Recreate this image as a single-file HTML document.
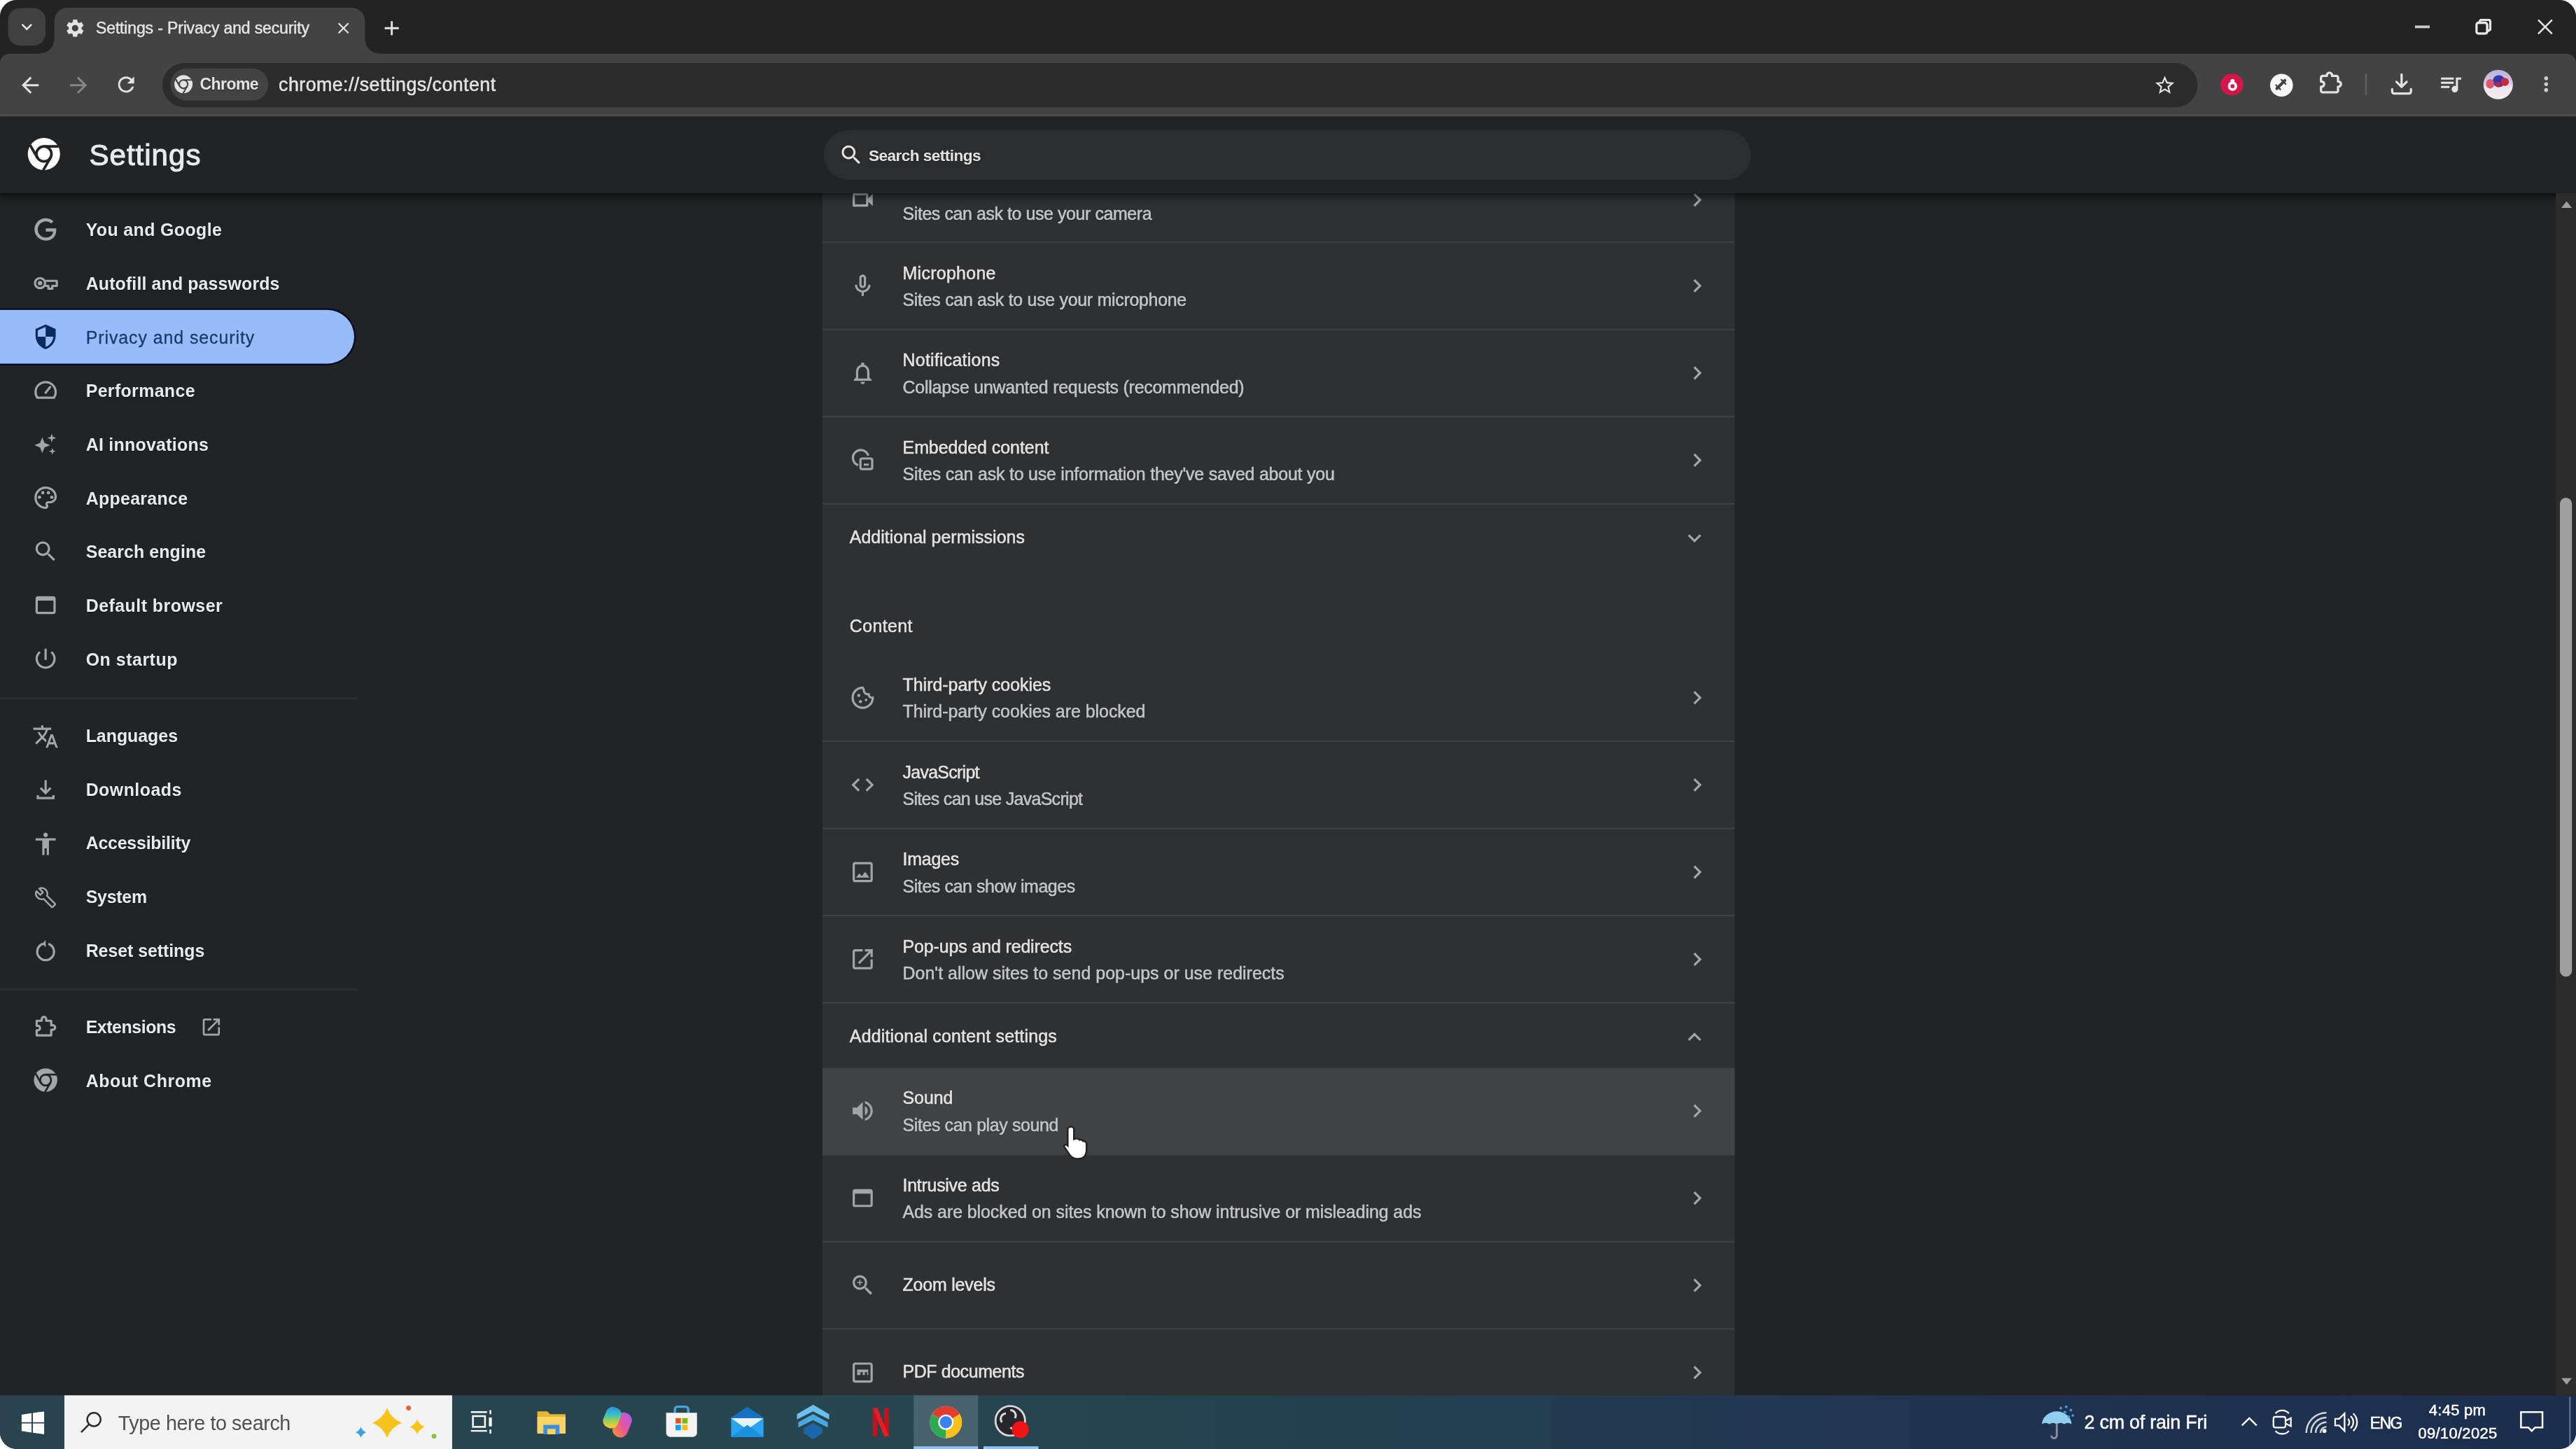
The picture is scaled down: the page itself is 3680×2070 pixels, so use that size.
<!DOCTYPE html><html><head><meta charset="utf-8"><title>Settings</title><style>html,body{margin:0;padding:0;background:#fff;width:3680px;height:2070px;overflow:hidden}#frame{position:absolute;left:0;top:0;width:3680px;height:2070px;border-radius:24px;overflow:hidden;background:#212324}#s{position:absolute;left:0;top:0;width:1920px;height:1080px;transform:scale(1.916667);transform-origin:0 0;filter:blur(0.400px);font-family:"Liberation Sans",sans-serif;}.t{display:block;-webkit-text-stroke:0.280px currentColor;text-shadow:0 0.500px 0.700px rgba(0,0,0,.45)}</style></head><body><div id="frame"><div id="s">
<div style="position:absolute;left:0px;top:0px;width:1920px;height:40px;background:#232323;"></div>
<div style="position:absolute;left:6px;top:6px;width:28px;height:28px;background:#404040;border-radius:9px;"></div>
<svg style="position:absolute;left:12.0px;top:12.0px;" width="16" height="16" viewBox="0 0 24 24"><path fill="#e3e3e3" d="M16.59 8.59L12 13.17 7.41 8.59 6 10l6 6 6-6z"/></svg>
<svg style="position:absolute;left:28px;top:5px" width="258" height="36" viewBox="28 5 258 36"><path d="M29.500 40.500 H282.500 V39.700 A10.500 10.500 0 0 1 272 29.200 V15.700 A10 10 0 0 0 262 5.700 H50.500 A10 10 0 0 0 40.500 15.700 V29.200 A10.500 10.500 0 0 1 30 39.700 H29.500 Z" fill="#434343"/></svg>
<svg style="position:absolute;left:48.0px;top:12.5px;" width="16" height="16" viewBox="0 0 24 24"><path fill="#e3e3e3" d="M19.14 12.94c.04-.3.06-.61.06-.94 0-.32-.02-.64-.07-.94l2.03-1.58c.18-.14.23-.41.12-.61l-1.92-3.32c-.12-.22-.37-.29-.59-.22l-2.39.96c-.5-.38-1.03-.7-1.62-.94l-.36-2.54c-.04-.24-.24-.41-.48-.41h-3.84c-.24 0-.43.17-.47.41l-.36 2.54c-.59.24-1.13.57-1.62.94l-2.39-.96c-.22-.08-.47 0-.59.22L2.74 8.87c-.12.21-.08.47.12.61l2.03 1.58c-.05.3-.09.63-.09.94s.02.64.07.94l-2.03 1.58c-.18.14-.23.41-.12.61l1.92 3.32c.12.22.37.29.59.22l2.39-.96c.5.38 1.03.7 1.62.94l.36 2.54c.05.24.24.41.48.41h3.84c.24 0 .44-.17.47-.41l.36-2.54c.59-.24 1.13-.56 1.62-.94l2.39.96c.22.08.47 0 .59-.22l1.92-3.32c.12-.22.07-.47-.12-.61l-2.01-1.58zM12 15.6c-1.98 0-3.6-1.62-3.6-3.6s1.62-3.6 3.6-3.6 3.6 1.62 3.6 3.6-1.62 3.6-3.6 3.6z"/></svg>
<span class="t" style="position:absolute;left:71.5px;top:10.5px;height:20px;line-height:20px;font-size:12px;color:#e3e3e3;font-weight:400;white-space:nowrap;letter-spacing:-0.078px;">Settings - Privacy and security</span>
<svg style="position:absolute;left:249.0px;top:13.5px;" width="14" height="14" viewBox="0 0 24 24"><path fill="#e3e3e3" d="M19 6.41L17.59 5 12 10.59 6.41 5 5 6.41 10.59 12 5 17.59 6.41 19 12 13.41 17.59 19 19 17.59 13.41 12z"/></svg>
<svg style="position:absolute;left:283.0px;top:11.5px;" width="18" height="18" viewBox="0 0 24 24"><path fill="#e3e3e3" d="M19 13h-6v6h-2v-6H5v-2h6V5h2v6h6v2z"/></svg>
<div style="position:absolute;left:1800px;top:18.7px;width:10.5px;height:1.9px;background:#c9c9c9;"></div>
<svg style="position:absolute;left:1845px;top:14px" width="12" height="12" viewBox="0 0 12 12" fill="none" stroke="#e8e8e8" stroke-width="1.800"><rect x="0.8" y="3" width="8" height="8" rx="1.5"/><path d="M3.2 2.8 V2.3 a1.5 1.5 0 0 1 1.5 -1.5 H9.7 a1.5 1.5 0 0 1 1.5 1.5 V7.3 a1.5 1.5 0 0 1 -1.5 1.5 H9.2"/></svg>
<svg style="position:absolute;left:1891px;top:14px" width="12" height="12" viewBox="0 0 12 12" stroke="#e3e3e3" stroke-width="1.3"><path d="M0.8 0.8 L11.2 11.2 M11.2 0.8 L0.8 11.2"/></svg>
<div style="position:absolute;left:0px;top:39.7px;width:1920px;height:47.3px;background:#434343;border-radius:7px 7px 0 0;"></div>
<div style="position:absolute;left:0px;top:85.3px;width:1920px;height:1.3px;background:#535455;"></div>
<svg style="position:absolute;left:13.0px;top:53.5px;" width="19" height="19" viewBox="0 0 24 24"><path fill="#e3e3e3" d="M20 11H7.83l5.59-5.59L12 4l-8 8 8 8 1.41-1.41L7.83 13H20v-2z"/></svg>
<svg style="position:absolute;left:48.5px;top:53.5px;" width="19" height="19" viewBox="0 0 24 24"><path fill="#858585" d="M12 4l-1.41 1.41L16.17 11H4v2h12.17l-5.58 5.59L12 20l8-8z"/></svg>
<svg style="position:absolute;left:85.0px;top:54.0px;" width="18" height="18" viewBox="0 0 24 24"><path fill="#e3e3e3" d="M17.65 6.35C16.2 4.9 14.21 4 12 4c-4.42 0-7.99 3.58-7.99 8s3.57 8 7.99 8c3.73 0 6.84-2.55 7.73-6h-2.08c-.82 2.33-3.04 4-5.65 4-3.31 0-6-2.69-6-6s2.69-6 6-6c1.66 0 3.14.69 4.22 1.78L13 11h7V4l-2.35 2.35z"/></svg>
<div style="position:absolute;left:121px;top:47px;width:1516.5px;height:32.7px;background:#2c2c2c;border-radius:16.500px;"></div>
<div style="position:absolute;left:126.5px;top:51px;width:73.5px;height:24px;background:#434343;border-radius:12px;"></div>
<svg style="position:absolute;left:129.25px;top:55.25px" width="15.5" height="15.5" viewBox="0 0 24 24"><circle cx="12" cy="12" r="10.5" fill="#e3e3e3"/><circle cx="12" cy="12" r="4.9" fill="none" stroke="#434343" stroke-width="1.7"/><g stroke="#434343" stroke-width="1.7"><line x1="12" y1="7.1" x2="21.5" y2="7.1"/><line x1="12" y1="7.1" x2="21.5" y2="7.1" transform="rotate(120 12 12)"/><line x1="12" y1="7.1" x2="21.5" y2="7.1" transform="rotate(240 12 12)"/></g></svg>
<span class="t" style="position:absolute;left:149px;top:53.0px;height:20px;line-height:20px;font-size:12px;color:#e3e3e3;font-weight:700;white-space:nowrap;letter-spacing:-0.307px;-webkit-text-stroke:0;">Chrome</span>
<span class="t" style="position:absolute;left:207.7px;top:53.3px;height:20px;line-height:20px;font-size:14px;color:#e3e3e3;font-weight:400;white-space:nowrap;letter-spacing:0.223px;">chrome://settings/content</span>
<svg style="position:absolute;left:1605.0px;top:54.5px;" width="17" height="17" viewBox="0 0 24 24"><path fill="#e3e3e3" d="M22 9.24l-7.19-.62L12 2 9.19 8.63 2 9.24l5.46 4.73L5.82 21 12 17.27 18.18 21l-1.63-7.03L22 9.24zM12 15.4l-3.76 2.27 1-4.28-3.32-2.88 4.38-.38L12 6.1l1.71 4.04 4.38.38-3.32 2.88 1 4.28L12 15.4z"/></svg>
<div style="position:absolute;left:1655.25px;top:54.75px;width:16.500px;height:16.500px;border-radius:50%;background:#d4164a"></div>
<svg style="position:absolute;left:1658.5px;top:57.5px" width="10" height="11" viewBox="0 0 10 11"><circle cx="5" cy="6.200" r="3.500" fill="#fff"/><circle cx="5" cy="2.300" r="1.500" fill="#fff"/><circle cx="5" cy="6.300" r="1.500" fill="#d81b4a"/></svg>
<div style="position:absolute;left:1691.5px;top:54.5px;width:17px;height:17px;border-radius:50%;background:#f7f7f7"></div>
<svg style="position:absolute;left:1694px;top:57px" width="12" height="12" viewBox="0 0 12 12" stroke="#434343" stroke-width="2.2" stroke-linecap="round"><path d="M3 9 L9 3"/><path d="M2.4 6.4 L5.6 9.6 M6.4 2.4 L9.6 5.6" stroke-width="1.2"/></svg>
<svg style="position:absolute;left:1725.5px;top:50.4px" width="21" height="21" viewBox="0 0 24 24" fill="none" stroke="#e3e3e3" stroke-width="2" stroke-linejoin="round"><path d="M4.500 9 a1.500 1.500 0 0 1 1.500 -1.500 H9.500 V7 a2.200 2.200 0 0 1 4.400 0 V7.500 H17.500 a1.500 1.500 0 0 1 1.500 1.500 V12.300 H19.300 a2.200 2.200 0 0 1 0 4.400 H19 V20 a1.500 1.500 0 0 1 -1.500 1.500 H6 a1.500 1.500 0 0 1 -1.500 -1.500 V16.700 H5 a2.200 2.200 0 0 0 0 -4.400 H4.500 Z"/></svg>
<div style="position:absolute;left:1763px;top:55px;width:1px;height:16px;background:#666666;"></div>
<svg style="position:absolute;left:1780px;top:53px" width="20" height="20" viewBox="0 0 20 20" fill="none" stroke="#e3e3e3" stroke-width="1.7" stroke-linecap="round" stroke-linejoin="round"><path d="M10 2.5 V11.5 M6.2 8 L10 11.8 L13.8 8"/><path d="M3 13.5 V15.2 a1.5 1.5 0 0 0 1.5 1.5 H15.5 a1.5 1.5 0 0 0 1.5 -1.5 V13.5"/></svg>
<svg style="position:absolute;left:1817.0px;top:53.0px;" width="19" height="19" viewBox="0 0 24 24"><path fill="#e3e3e3" d="M15 6H3v2h12V6zm0 4H3v2h12v-2zM3 16h8v-2H3v2zM17 6v8.18c-.31-.11-.65-.18-1-.18-1.66 0-3 1.34-3 3s1.34 3 3 3 3-1.34 3-3V8h3V6h-5z"/></svg>
<div style="position:absolute;left:1851px;top:52px;width:22px;height:22px;border-radius:50%;overflow:hidden;background:linear-gradient(180deg,#b7b3dc 0%,#cfc6e2 40%,#f0e6ee 62%,#f4ecf0 100%);"><div style="position:absolute;left:7px;top:4px;width:9px;height:9px;border-radius:50%;background:#3236b4"></div><div style="position:absolute;left:12.500px;top:5.500px;width:6px;height:6px;border-radius:50%;background:#c62a3c"></div><div style="position:absolute;left:1.500px;top:7px;width:6.500px;height:7px;border-radius:50%;background:#e0566a"></div><div style="position:absolute;left:9px;top:9px;width:4px;height:4px;border-radius:50%;background:#b82846"></div></div>
<svg style="position:absolute;left:1889.25px;top:54.25px;" width="17.5" height="17.5" viewBox="0 0 24 24"><path fill="#cfcfcf" d="M12 8c1.1 0 2-.9 2-2s-.9-2-2-2-2 .9-2 2 .9 2 2 2zm0 2c-1.1 0-2 .9-2 2s.9 2 2 2 2-.9 2-2-.9-2-2-2zm0 6c-1.1 0-2 .9-2 2s.9 2 2 2 2-.9 2-2-.9-2-2-2z"/></svg>
<div style="position:absolute;left:0px;top:87px;width:1920px;height:953px;background:#212324;"></div>
<div style="position:absolute;left:613.3px;top:100px;width:679.7px;height:960px;background:#2f3032;"></div>
<svg style="position:absolute;left:632.8px;top:139.0px;" width="20" height="20" viewBox="0 0 24 24"><path fill="#a2a5a9" d="M15 8v8H5V8h10m1-2H4c-.55 0-1 .45-1 1v10c0 .55.45 1 1 1h12c.55 0 1-.45 1-1v-3.5l4 4v-11l-4 4V7c0-.55-.45-1-1-1z"/></svg><span class="t" style="position:absolute;left:672.8px;top:129.7px;height:20px;line-height:20px;font-size:13px;color:#e3e3e3;font-weight:400;white-space:nowrap;letter-spacing:0px;"></span><span class="t" style="position:absolute;left:672.8px;top:149.8px;height:20px;line-height:20px;font-size:13px;color:#c4c5c7;font-weight:400;white-space:nowrap;letter-spacing:-0.209px;">Sites can ask to use your camera</span><svg style="position:absolute;left:1255.0px;top:139.0px;" width="20" height="20" viewBox="0 0 24 24"><path fill="#a2a5a9" d="M10 6L8.59 7.41 13.17 12l-4.58 4.59L10 18l6-6z"/></svg>
<div style="position:absolute;left:613.3px;top:180px;width:679.7px;height:1px;background:#424346;"></div><svg style="position:absolute;left:632.8px;top:203.0px;" width="20" height="20" viewBox="0 0 24 24"><path fill="#a2a5a9" d="M12 14c1.66 0 3-1.34 3-3V5c0-1.66-1.34-3-3-3S9 3.34 9 5v6c0 1.66 1.34 3 3 3zm-1-9c0-.55.45-1 1-1s1 .45 1 1v6c0 .55-.45 1-1 1s-1-.45-1-1V5zm6 6c0 2.76-2.24 5-5 5s-5-2.24-5-5H5c0 3.53 2.61 6.43 6 6.92V21h2v-3.08c3.39-.49 6-3.39 6-6.92h-2z"/></svg><span class="t" style="position:absolute;left:672.8px;top:193.7px;height:20px;line-height:20px;font-size:13px;color:#e3e3e3;font-weight:400;white-space:nowrap;letter-spacing:0.156px;">Microphone</span><span class="t" style="position:absolute;left:672.8px;top:213.8px;height:20px;line-height:20px;font-size:13px;color:#c4c5c7;font-weight:400;white-space:nowrap;letter-spacing:-0.147px;">Sites can ask to use your microphone</span><svg style="position:absolute;left:1255.0px;top:203.0px;" width="20" height="20" viewBox="0 0 24 24"><path fill="#a2a5a9" d="M10 6L8.59 7.41 13.17 12l-4.58 4.59L10 18l6-6z"/></svg>
<div style="position:absolute;left:613.3px;top:245px;width:679.7px;height:1px;background:#424346;"></div><svg style="position:absolute;left:632.8px;top:268.0px;" width="20" height="20" viewBox="0 0 24 24"><path fill="#a2a5a9" d="M12 22c1.1 0 2-.9 2-2h-4c0 1.1.9 2 2 2zm6-6v-5c0-3.07-1.63-5.64-4.5-6.32V4c0-.83-.67-1.5-1.5-1.5s-1.5.67-1.5 1.5v.68C7.64 5.36 6 7.92 6 11v5l-2 2v1h16v-1l-2-2zm-2 1H8v-6c0-2.48 1.51-4.5 4-4.5s4 2.02 4 4.5v6z"/></svg><span class="t" style="position:absolute;left:672.8px;top:258.7px;height:20px;line-height:20px;font-size:13px;color:#e3e3e3;font-weight:400;white-space:nowrap;letter-spacing:0.130px;">Notifications</span><span class="t" style="position:absolute;left:672.8px;top:278.8px;height:20px;line-height:20px;font-size:13px;color:#c4c5c7;font-weight:400;white-space:nowrap;letter-spacing:-0.123px;">Collapse unwanted requests (recommended)</span><svg style="position:absolute;left:1255.0px;top:268.0px;" width="20" height="20" viewBox="0 0 24 24"><path fill="#a2a5a9" d="M10 6L8.59 7.41 13.17 12l-4.58 4.59L10 18l6-6z"/></svg>
<div style="position:absolute;left:613.3px;top:310px;width:679.7px;height:1px;background:#424346;"></div><svg style="position:absolute;left:632.8px;top:333.0px" width="20" height="20" viewBox="0 0 24 24" fill="none" stroke="#a2a5a9" stroke-width="2"><path d="M8 16.500 A7 7 0 1 1 17 8"/><rect x="10" y="10.500" width="10.500" height="9.500" rx="1.500"/><path d="M13 16 h4.500" stroke-width="1.800"/></svg><span class="t" style="position:absolute;left:672.8px;top:323.7px;height:20px;line-height:20px;font-size:13px;color:#e3e3e3;font-weight:400;white-space:nowrap;letter-spacing:-0.009px;">Embedded content</span><span class="t" style="position:absolute;left:672.8px;top:343.8px;height:20px;line-height:20px;font-size:13px;color:#c4c5c7;font-weight:400;white-space:nowrap;letter-spacing:-0.102px;">Sites can ask to use information they've saved about you</span><svg style="position:absolute;left:1255.0px;top:333.0px;" width="20" height="20" viewBox="0 0 24 24"><path fill="#a2a5a9" d="M10 6L8.59 7.41 13.17 12l-4.58 4.59L10 18l6-6z"/></svg>
<div style="position:absolute;left:613.3px;top:375px;width:679.7px;height:1px;background:#424346;"></div>
<span class="t" style="position:absolute;left:633.3px;top:390.5px;height:20px;line-height:20px;font-size:13px;color:#e3e3e3;font-weight:400;white-space:nowrap;letter-spacing:0.019px;">Additional permissions</span>
<svg style="position:absolute;left:1253.0px;top:390.5px;" width="20" height="20" viewBox="0 0 24 24"><path fill="#a2a5a9" d="M16.59 8.59L12 13.17 7.41 8.59 6 10l6 6 6-6z"/></svg>
<span class="t" style="position:absolute;left:633.3px;top:457.0px;height:20px;line-height:20px;font-size:13px;color:#e3e3e3;font-weight:400;white-space:nowrap;letter-spacing:0.208px;">Content</span>
<svg style="position:absolute;left:632.8px;top:510.0px" width="20" height="20" viewBox="0 0 24 24"><path fill="none" stroke="#a2a5a9" stroke-width="2" d="M12 3 a9 9 0 1 0 9 9 c-2 .3 -3.600 -1 -3.600 -3 c-2.400 .4 -4.400 -1.400 -4.400 -3.500 c0 -.9 -.4 -1.800 -1 -2.500z"/><circle cx="8.5" cy="10" r="1.4" fill="#a2a5a9"/><circle cx="10" cy="15.500" r="1.4" fill="#a2a5a9"/><circle cx="15" cy="14" r="1.2" fill="#a2a5a9"/></svg><span class="t" style="position:absolute;left:672.8px;top:500.7px;height:20px;line-height:20px;font-size:13px;color:#e3e3e3;font-weight:400;white-space:nowrap;letter-spacing:-0.002px;">Third-party cookies</span><span class="t" style="position:absolute;left:672.8px;top:520.8px;height:20px;line-height:20px;font-size:13px;color:#c4c5c7;font-weight:400;white-space:nowrap;letter-spacing:-0.012px;">Third-party cookies are blocked</span><svg style="position:absolute;left:1255.0px;top:510.0px;" width="20" height="20" viewBox="0 0 24 24"><path fill="#a2a5a9" d="M10 6L8.59 7.41 13.17 12l-4.58 4.59L10 18l6-6z"/></svg>
<div style="position:absolute;left:613.3px;top:552px;width:679.7px;height:1px;background:#424346;"></div><svg style="position:absolute;left:632.8px;top:575.0px;" width="20" height="20" viewBox="0 0 24 24"><path fill="#a2a5a9" d="M9.4 16.6L4.8 12l4.6-4.6L8 6l-6 6 6 6 1.4-1.4zm5.2 0l4.6-4.6-4.6-4.6L16 6l6 6-6 6-1.4-1.4z"/></svg><span class="t" style="position:absolute;left:672.8px;top:565.7px;height:20px;line-height:20px;font-size:13px;color:#e3e3e3;font-weight:400;white-space:nowrap;letter-spacing:-0.370px;">JavaScript</span><span class="t" style="position:absolute;left:672.8px;top:585.8px;height:20px;line-height:20px;font-size:13px;color:#c4c5c7;font-weight:400;white-space:nowrap;letter-spacing:-0.348px;">Sites can use JavaScript</span><svg style="position:absolute;left:1255.0px;top:575.0px;" width="20" height="20" viewBox="0 0 24 24"><path fill="#a2a5a9" d="M10 6L8.59 7.41 13.17 12l-4.58 4.59L10 18l6-6z"/></svg>
<div style="position:absolute;left:613.3px;top:617px;width:679.7px;height:1px;background:#424346;"></div><svg style="position:absolute;left:632.8px;top:640.0px;" width="20" height="20" viewBox="0 0 24 24"><path fill="#a2a5a9" d="M19 5v14H5V5h14m0-2H5c-1.1 0-2 .9-2 2v14c0 1.1.9 2 2 2h14c1.1 0 2-.9 2-2V5c0-1.1-.9-2-2-2zm-4.86 8.86l-3 3.87L9 13.14 6 17h12l-3.86-5.14z"/></svg><span class="t" style="position:absolute;left:672.8px;top:630.7px;height:20px;line-height:20px;font-size:13px;color:#e3e3e3;font-weight:400;white-space:nowrap;letter-spacing:-0.107px;">Images</span><span class="t" style="position:absolute;left:672.8px;top:650.8px;height:20px;line-height:20px;font-size:13px;color:#c4c5c7;font-weight:400;white-space:nowrap;letter-spacing:-0.212px;">Sites can show images</span><svg style="position:absolute;left:1255.0px;top:640.0px;" width="20" height="20" viewBox="0 0 24 24"><path fill="#a2a5a9" d="M10 6L8.59 7.41 13.17 12l-4.58 4.59L10 18l6-6z"/></svg>
<div style="position:absolute;left:613.3px;top:682px;width:679.7px;height:1px;background:#424346;"></div><svg style="position:absolute;left:632.8px;top:705.0px;" width="20" height="20" viewBox="0 0 24 24"><path fill="#a2a5a9" d="M19 19H5V5h7V3H5c-1.11 0-2 .9-2 2v14c0 1.1.89 2 2 2h14c1.1 0 2-.9 2-2v-7h-2v7zM14 3v2h3.59l-9.83 9.83 1.41 1.41L19 6.41V10h2V3h-7z"/></svg><span class="t" style="position:absolute;left:672.8px;top:695.7px;height:20px;line-height:20px;font-size:13px;color:#e3e3e3;font-weight:400;white-space:nowrap;letter-spacing:-0.057px;">Pop-ups and redirects</span><span class="t" style="position:absolute;left:672.8px;top:715.8px;height:20px;line-height:20px;font-size:13px;color:#c4c5c7;font-weight:400;white-space:nowrap;letter-spacing:0.018px;">Don't allow sites to send pop-ups or use redirects</span><svg style="position:absolute;left:1255.0px;top:705.0px;" width="20" height="20" viewBox="0 0 24 24"><path fill="#a2a5a9" d="M10 6L8.59 7.41 13.17 12l-4.58 4.59L10 18l6-6z"/></svg>
<div style="position:absolute;left:613.3px;top:747px;width:679.7px;height:1px;background:#424346;"></div>
<span class="t" style="position:absolute;left:633.3px;top:762.7px;height:20px;line-height:20px;font-size:13px;color:#e3e3e3;font-weight:400;white-space:nowrap;letter-spacing:0.101px;">Additional content settings</span>
<svg style="position:absolute;left:1253.0px;top:762.5px;" width="20" height="20" viewBox="0 0 24 24"><path fill="#a2a5a9" d="M12 8l-6 6 1.41 1.41L12 10.83l4.59 4.58L18 14z"/></svg>
<div style="position:absolute;left:613.3px;top:796px;width:679.7px;height:64px;background:#414244;"></div><svg style="position:absolute;left:632.8px;top:818.0px;" width="20" height="20" viewBox="0 0 24 24"><path fill="#a2a5a9" d="M3 9v6h4l5 5V4L7 9H3zm13.5 3c0-1.77-1.02-3.29-2.5-4.03v8.05c1.48-.73 2.5-2.25 2.5-4.02zM14 3.23v2.06c2.89.86 5 3.54 5 6.71s-2.11 5.85-5 6.71v2.06c4.01-.91 7-4.49 7-8.77s-2.99-7.86-7-8.77z"/></svg><span class="t" style="position:absolute;left:672.8px;top:808.7px;height:20px;line-height:20px;font-size:13px;color:#e3e3e3;font-weight:400;white-space:nowrap;letter-spacing:-0.019px;">Sound</span><span class="t" style="position:absolute;left:672.8px;top:828.8px;height:20px;line-height:20px;font-size:13px;color:#c4c5c7;font-weight:400;white-space:nowrap;letter-spacing:-0.198px;">Sites can play sound</span><svg style="position:absolute;left:1255.0px;top:818.0px;" width="20" height="20" viewBox="0 0 24 24"><path fill="#a2a5a9" d="M10 6L8.59 7.41 13.17 12l-4.58 4.59L10 18l6-6z"/></svg>
<div style="position:absolute;left:613.3px;top:860px;width:679.7px;height:1px;background:#424346;"></div><svg style="position:absolute;left:632.8px;top:883.0px;" width="20" height="20" viewBox="0 0 24 24"><path fill="#a2a5a9" d="M19 4H5c-1.11 0-2 .9-2 2v12c0 1.1.89 2 2 2h14c1.1 0 2-.9 2-2V6c0-1.1-.89-2-2-2zm0 14H5V8h14v10z"/></svg><span class="t" style="position:absolute;left:672.8px;top:873.7px;height:20px;line-height:20px;font-size:13px;color:#e3e3e3;font-weight:400;white-space:nowrap;letter-spacing:-0.131px;">Intrusive ads</span><span class="t" style="position:absolute;left:672.8px;top:893.8px;height:20px;line-height:20px;font-size:13px;color:#c4c5c7;font-weight:400;white-space:nowrap;letter-spacing:-0.034px;">Ads are blocked on sites known to show intrusive or misleading ads</span><svg style="position:absolute;left:1255.0px;top:883.0px;" width="20" height="20" viewBox="0 0 24 24"><path fill="#a2a5a9" d="M10 6L8.59 7.41 13.17 12l-4.58 4.59L10 18l6-6z"/></svg>
<div style="position:absolute;left:613.3px;top:925px;width:679.7px;height:1px;background:#424346;"></div><svg style="position:absolute;left:632.8px;top:948.0px;" width="20" height="20" viewBox="0 0 24 24"><path fill="#a2a5a9" d="M15.5 14h-.79l-.28-.27C15.41 12.59 16 11.11 16 9.5 16 5.91 13.09 3 9.5 3S3 5.91 3 9.5 5.91 16 9.5 16c1.61 0 3.09-.59 4.23-1.57l.27.28v.79l5 4.99L20.49 19l-4.99-5zm-6 0C7.01 14 5 11.99 5 9.5S7.01 5 9.5 5 14 7.01 14 9.5 11.99 14 9.5 14zm2.5-4h-2v2H9v-2H7V9h2V7h1v2h2v1z"/></svg><span class="t" style="position:absolute;left:672.8px;top:948.3px;height:20px;line-height:20px;font-size:13px;color:#e3e3e3;font-weight:400;white-space:nowrap;letter-spacing:-0.098px;">Zoom levels</span><svg style="position:absolute;left:1255.0px;top:948.0px;" width="20" height="20" viewBox="0 0 24 24"><path fill="#a2a5a9" d="M10 6L8.59 7.41 13.17 12l-4.58 4.59L10 18l6-6z"/></svg>
<div style="position:absolute;left:613.3px;top:990px;width:679.7px;height:1px;background:#424346;"></div><svg style="position:absolute;left:632.8px;top:1013.0px" width="20" height="20" viewBox="0 0 24 24" fill="none" stroke="#a2a5a9" stroke-width="2"><rect x="4" y="4" width="16" height="16" rx="1.500"/><path d="M7 10.500 h10 M7 13 h3 M12 13 h2 M16 13 h1" stroke-width="2.400"/></svg><span class="t" style="position:absolute;left:672.8px;top:1013.3px;height:20px;line-height:20px;font-size:13px;color:#e3e3e3;font-weight:400;white-space:nowrap;letter-spacing:-0.208px;">PDF documents</span><svg style="position:absolute;left:1255.0px;top:1013.0px;" width="20" height="20" viewBox="0 0 24 24"><path fill="#a2a5a9" d="M10 6L8.59 7.41 13.17 12l-4.58 4.59L10 18l6-6z"/></svg>
<div style="position:absolute;left:0px;top:87px;width:1920px;height:56.5px;background:#212324;box-shadow:0 2px 5px 1px rgba(0,0,0,.55);"></div>
<svg style="position:absolute;left:19.049999999999997px;top:101.05px" width="27.5" height="27.5" viewBox="0 0 24 24"><circle cx="12" cy="12" r="10.5" fill="#ffffff"/><circle cx="12" cy="12" r="4.9" fill="none" stroke="#212324" stroke-width="1.7"/><g stroke="#212324" stroke-width="1.7"><line x1="12" y1="7.1" x2="21.5" y2="7.1"/><line x1="12" y1="7.1" x2="21.5" y2="7.1" transform="rotate(120 12 12)"/><line x1="12" y1="7.1" x2="21.5" y2="7.1" transform="rotate(240 12 12)"/></g></svg>
<span class="t" style="position:absolute;left:66.5px;top:106.0px;height:20px;line-height:20px;font-size:22px;color:#e8eaed;font-weight:400;white-space:nowrap;letter-spacing:0.500px;height:30px;line-height:30px;margin-top:-5px;-webkit-text-stroke:0.550px currentColor;">Settings</span>
<div style="position:absolute;left:614px;top:96.5px;width:691.3px;height:37.8px;background:#2c2d2e;border-radius:19px;"></div>
<svg style="position:absolute;left:624.5px;top:105.5px;" width="19" height="19" viewBox="0 0 24 24"><path fill="#e3e3e3" d="M15.5 14h-.79l-.28-.27C15.41 12.59 16 11.11 16 9.5 16 5.91 13.09 3 9.5 3S3 5.91 3 9.5 5.91 16 9.5 16c1.61 0 3.09-.59 4.23-1.57l.27.28v.79l5 4.99L20.49 19l-4.99-5zm-6 0C7.01 14 5 11.99 5 9.5S7.01 5 9.5 5 14 7.01 14 9.5 11.99 14 9.5 14z"/></svg>
<span class="t" style="position:absolute;left:647.5px;top:105.6px;height:20px;line-height:20px;font-size:11.8px;color:#e3e3e3;font-weight:700;white-space:nowrap;letter-spacing:-0.291px;-webkit-text-stroke:0;">Search settings</span>
<span class="t" style="position:absolute;left:64px;top:161.9px;height:20px;line-height:20px;font-size:13px;color:#e8eaed;font-weight:700;white-space:nowrap;letter-spacing:0.200px;-webkit-text-stroke:0;">You and Google</span><svg style="position:absolute;left:23.799999999999997px;top:161.0px;" width="20" height="20" viewBox="0 0 24 24"><path fill="#a2a5a9" d="M21.35 11.1h-9.17v2.73h6.51c-.33 3.81-3.5 5.44-6.5 5.44C8.36 19.27 5 16.25 5 12c0-4.1 3.2-7.27 7.2-7.27 3.09 0 4.9 1.97 4.9 1.97L19 4.72S16.56 2 12.1 2C6.42 2 2.03 6.8 2.03 12c0 5.05 4.13 10 10.22 10 5.35 0 9.25-3.67 9.25-9.09 0-1.15-.15-1.81-.15-1.81z"/></svg>
<span class="t" style="position:absolute;left:64px;top:201.9px;height:20px;line-height:20px;font-size:13px;color:#e8eaed;font-weight:700;white-space:nowrap;letter-spacing:0.067px;-webkit-text-stroke:0;">Autofill and passwords</span><svg style="position:absolute;left:23.799999999999997px;top:201px" width="20" height="20" viewBox="0 0 24 24" fill="none" stroke="#a2a5a9" stroke-width="2"><circle cx="7" cy="12" r="4.500"/><circle cx="7" cy="12" r="1" fill="#a2a5a9"/><path d="M11.500 10 H22 V14.500 H18 V17 H14.500 V14.500 H11.500" stroke-linejoin="round"/></svg>
<div style="position:absolute;left:-2px;top:230.7px;width:266.2px;height:40.6px;background:#98bcfa;border-radius:0 20.500px 20.500px 0;box-shadow:0 0 0 1.200px #030b22;"></div><span class="t" style="position:absolute;left:64px;top:241.9px;height:20px;line-height:20px;font-size:13px;color:#1b3a6b;font-weight:400;white-space:nowrap;letter-spacing:0.484px;-webkit-text-stroke:0.150px currentColor;text-shadow:none;">Privacy and security</span><svg style="position:absolute;left:23.799999999999997px;top:241.0px;" width="20" height="20" viewBox="0 0 24 24"><path fill="#0a2a5e" d="M12 1L3 5v6c0 5.55 3.84 10.74 9 12 5.16-1.26 9-6.45 9-12V5l-9-4zm0 10.99h7c-.53 4.12-3.28 7.79-7 8.94V12H5V6.3l7-3.11v8.8z"/></svg>
<span class="t" style="position:absolute;left:64px;top:281.9px;height:20px;line-height:20px;font-size:13px;color:#e8eaed;font-weight:700;white-space:nowrap;letter-spacing:0.183px;-webkit-text-stroke:0;">Performance</span><svg style="position:absolute;left:23.799999999999997px;top:281px" width="20" height="20" viewBox="0 0 24 24" fill="none" stroke="#a2a5a9" stroke-width="2"><path d="M4.500 18.500 A9 9 0 1 1 19.500 18.500 Z" stroke-linejoin="round"/><path d="M12 14 L16 9" stroke-linecap="round"/></svg>
<span class="t" style="position:absolute;left:64px;top:321.9px;height:20px;line-height:20px;font-size:13px;color:#e8eaed;font-weight:700;white-space:nowrap;letter-spacing:0.138px;-webkit-text-stroke:0;">AI innovations</span><svg style="position:absolute;left:23.799999999999997px;top:321px" width="20" height="20" viewBox="0 0 24 24" fill="#a2a5a9"><path d="M9 6 L11 11 L16 13 L11 15 L9 20 L7 15 L2 13 L7 11Z"/><path d="M17.500 2.500 L18.500 5.500 L21.500 6.500 L18.500 7.500 L17.500 10.500 L16.500 7.500 L13.500 6.500 L16.500 5.500Z"/><path d="M18 15.500 L18.800 17.700 L21 18.500 L18.800 19.300 L18 21.500 L17.200 19.300 L15 18.500 L17.200 17.700Z"/></svg>
<span class="t" style="position:absolute;left:64px;top:361.9px;height:20px;line-height:20px;font-size:13px;color:#e8eaed;font-weight:700;white-space:nowrap;letter-spacing:0.158px;-webkit-text-stroke:0;">Appearance</span><svg style="position:absolute;left:23.799999999999997px;top:361px" width="20" height="20" viewBox="0 0 24 24" ><path fill="#a2a5a9" d="M12 22C6.49 22 2 17.51 2 12S6.49 2 12 2s10 4.04 10 9c0 3.31-2.69 6-6 6h-1.77c-.28 0-.5.22-.5.5 0 .12.05.23.13.33.41.47.64 1.06.64 1.67 0 1.38-1.12 2.5-2.5 2.5zm0-18c-4.41 0-8 3.59-8 8s3.59 8 8 8c.28 0 .5-.22.5-.5 0-.16-.08-.28-.14-.35-.41-.46-.63-1.05-.63-1.65 0-1.38 1.12-2.5 2.5-2.5H16c2.21 0 4-1.79 4-4 0-3.86-3.59-7-8-7z"/><circle cx="6.500" cy="11.500" r="1.500" fill="#a2a5a9"/><circle cx="9.500" cy="7.500" r="1.500" fill="#a2a5a9"/><circle cx="14.500" cy="7.500" r="1.500" fill="#a2a5a9"/><circle cx="17.500" cy="11.500" r="1.500" fill="#a2a5a9"/></svg>
<span class="t" style="position:absolute;left:64px;top:401.9px;height:20px;line-height:20px;font-size:13px;color:#e8eaed;font-weight:700;white-space:nowrap;letter-spacing:0.048px;-webkit-text-stroke:0;">Search engine</span><svg style="position:absolute;left:23.799999999999997px;top:401.0px;" width="20" height="20" viewBox="0 0 24 24"><path fill="#a2a5a9" d="M15.5 14h-.79l-.28-.27C15.41 12.59 16 11.11 16 9.5 16 5.91 13.09 3 9.5 3S3 5.91 3 9.5 5.91 16 9.5 16c1.61 0 3.09-.59 4.23-1.57l.27.28v.79l5 4.99L20.49 19l-4.99-5zm-6 0C7.01 14 5 11.99 5 9.5S7.01 5 9.5 5 14 7.01 14 9.5 11.99 14 9.5 14z"/></svg>
<span class="t" style="position:absolute;left:64px;top:441.9px;height:20px;line-height:20px;font-size:13px;color:#e8eaed;font-weight:700;white-space:nowrap;letter-spacing:0.250px;-webkit-text-stroke:0;">Default browser</span><svg style="position:absolute;left:23.799999999999997px;top:441.0px;" width="20" height="20" viewBox="0 0 24 24"><path fill="#a2a5a9" d="M19 4H5c-1.11 0-2 .9-2 2v12c0 1.1.89 2 2 2h14c1.1 0 2-.9 2-2V6c0-1.1-.89-2-2-2zm0 14H5V8h14v10z"/></svg>
<span class="t" style="position:absolute;left:64px;top:481.9px;height:20px;line-height:20px;font-size:13px;color:#e8eaed;font-weight:700;white-space:nowrap;letter-spacing:0.277px;-webkit-text-stroke:0;">On startup</span><svg style="position:absolute;left:23.799999999999997px;top:481.0px;" width="20" height="20" viewBox="0 0 24 24"><path fill="#a2a5a9" d="M13 3h-2v10h2V3zm4.83 2.17l-1.42 1.42C17.99 7.86 19 9.81 19 12c0 3.87-3.13 7-7 7s-7-3.13-7-7c0-2.19 1.01-4.14 2.58-5.42L6.17 5.17C4.23 6.82 3 9.26 3 12c0 4.97 4.03 9 9 9s9-4.03 9-9c0-2.74-1.23-5.18-3.17-6.83z"/></svg>
<div style="position:absolute;left:0px;top:519.5px;width:266px;height:1px;background:#313336;"></div>
<span class="t" style="position:absolute;left:64px;top:539.4px;height:20px;line-height:20px;font-size:13px;color:#e8eaed;font-weight:700;white-space:nowrap;letter-spacing:-0.014px;-webkit-text-stroke:0;">Languages</span><svg style="position:absolute;left:23.799999999999997px;top:538.5px;" width="20" height="20" viewBox="0 0 24 24"><path fill="#a2a5a9" d="M12.87 15.07l-2.54-2.51.03-.03c1.74-1.94 2.98-4.17 3.71-6.53H17V4h-7V2H8v2H1v1.99h11.17C11.5 7.92 10.44 9.75 9 11.35 8.07 10.32 7.3 9.19 6.69 8h-2c.73 1.63 1.73 3.17 2.98 4.56l-5.09 5.02L4 19l5-5 3.11 3.11.76-2.04zM18.5 10h-2L12 22h2l1.12-3h4.75L21 22h2l-4.5-12zm-2.62 7l1.62-4.33L19.12 17h-3.24z"/></svg>
<span class="t" style="position:absolute;left:64px;top:579.4px;height:20px;line-height:20px;font-size:13px;color:#e8eaed;font-weight:700;white-space:nowrap;letter-spacing:0.240px;-webkit-text-stroke:0;">Downloads</span><svg style="position:absolute;left:23.799999999999997px;top:578.5px" width="20" height="20" viewBox="0 0 24 24" fill="none" stroke="#a2a5a9" stroke-width="2"><path d="M12 3 V14 M7.500 10 L12 14.500 L16.500 10"/><path d="M5 16.500 V19 H19 V16.500"/></svg>
<span class="t" style="position:absolute;left:64px;top:619.4px;height:20px;line-height:20px;font-size:13px;color:#e8eaed;font-weight:700;white-space:nowrap;letter-spacing:-0.115px;-webkit-text-stroke:0;">Accessibility</span><svg style="position:absolute;left:23.799999999999997px;top:618.5px;" width="20" height="20" viewBox="0 0 24 24"><path fill="#a2a5a9" d="M12 2c1.1 0 2 .9 2 2s-.9 2-2 2-2-.9-2-2 .9-2 2-2zm9 7h-6v13h-2v-6h-2v6H9V9H3V7h18v2z"/></svg>
<span class="t" style="position:absolute;left:64px;top:659.4px;height:20px;line-height:20px;font-size:13px;color:#e8eaed;font-weight:700;white-space:nowrap;letter-spacing:-0.125px;-webkit-text-stroke:0;">System</span><svg style="position:absolute;left:23.799999999999997px;top:658.5px" width="20" height="20" viewBox="0 0 24 24" fill="none" stroke="#a2a5a9" stroke-width="2" stroke-linejoin="round"><path transform="translate(2.600 2.600) scale(0.780)" d="M22.7 19l-9.1-9.1c.9-2.3.4-5-1.5-6.9-2-2-5-2.4-7.4-1.3L9 6 6 9 1.6 4.7C.4 7.1.9 10.1 2.9 12.1c1.9 1.9 4.6 2.4 6.9 1.5l9.1 9.1c.4.4 1 .4 1.4 0l2.3-2.3c.5-.4.5-1.1.1-1.4z"/></svg>
<span class="t" style="position:absolute;left:64px;top:699.4px;height:20px;line-height:20px;font-size:13px;color:#e8eaed;font-weight:700;white-space:nowrap;letter-spacing:-0.027px;-webkit-text-stroke:0;">Reset settings</span><svg style="position:absolute;left:23.799999999999997px;top:698.5px" width="20" height="20" viewBox="0 0 24 24" fill="none" stroke="#a2a5a9" stroke-width="2"><path d="M9.500 5.400 A7.500 7.500 0 1 0 14.500 5.400"/><path d="M12 2 L9 5.300 L12 8.500" fill="#a2a5a9" stroke="none"/></svg>
<div style="position:absolute;left:0px;top:736.5px;width:266px;height:1px;background:#313336;"></div>
<span class="t" style="position:absolute;left:64px;top:756.1999999999999px;height:20px;line-height:20px;font-size:13px;color:#e8eaed;font-weight:700;white-space:nowrap;letter-spacing:-0.236px;-webkit-text-stroke:0;">Extensions</span><svg style="position:absolute;left:23.799999999999997px;top:755.3px" width="20" height="20" viewBox="0 0 24 24" fill="none" stroke="#a2a5a9" stroke-width="2" stroke-linejoin="round"><path d="M4 7 H8.500 V5.500 a2 2 0 0 1 4 0 V7 H17 V11 H18.500 a2 2 0 0 1 0 4 H17 V20 H4 V15.500 H5 a2 2 0 0 0 0 -4 H4 Z"/></svg>
<svg style="position:absolute;left:148.7px;top:756.5px;" width="17" height="17" viewBox="0 0 24 24"><path fill="#a2a5a9" d="M19 19H5V5h7V3H5c-1.11 0-2 .9-2 2v14c0 1.1.89 2 2 2h14c1.1 0 2-.9 2-2v-7h-2v7zM14 3v2h3.59l-9.83 9.83 1.41 1.41L19 6.41V10h2V3h-7z"/></svg>
<span class="t" style="position:absolute;left:64px;top:796.1999999999999px;height:20px;line-height:20px;font-size:13px;color:#e8eaed;font-weight:700;white-space:nowrap;letter-spacing:0.310px;-webkit-text-stroke:0;">About Chrome</span><svg style="position:absolute;left:23.799999999999997px;top:795.3px" width="20" height="20" viewBox="0 0 24 24"><circle cx="12" cy="12" r="10.5" fill="#a2a5a9"/><circle cx="12" cy="12" r="4.9" fill="none" stroke="#212324" stroke-width="1.7"/><g stroke="#212324" stroke-width="1.7"><line x1="12" y1="7.1" x2="21.5" y2="7.1"/><line x1="12" y1="7.1" x2="21.5" y2="7.1" transform="rotate(120 12 12)"/><line x1="12" y1="7.1" x2="21.5" y2="7.1" transform="rotate(240 12 12)"/></g></svg>
<div style="position:absolute;left:1905px;top:143.5px;width:15px;height:896.5px;background:#2c2c2c;"></div>
<div style="position:absolute;left:1908px;top:370.5px;width:9px;height:357px;background:#9f9f9f;border-radius:4.500px;"></div>
<svg style="position:absolute;left:1908.500px;top:150px" width="8" height="5"><path d="M0 5 L4 0 L8 5Z" fill="#9f9f9f"/></svg>
<svg style="position:absolute;left:1908.500px;top:1027.300px" width="8" height="5"><path d="M0 0 L4 5 L8 0Z" fill="#9f9f9f"/></svg>
<svg style="position:absolute;left:790.800px;top:838px" width="26" height="28" viewBox="0 0 20 24" preserveAspectRatio="none"><path d="M5.500 1.500 c1 0 1.800 .8 1.800 1.800 V9.500 l1 -.3 c.9 -.2 1.700 .1 2.100 .8 c.8 -.3 1.700 0 2.200 .8 c.9 -.2 1.900 .5 1.900 1.700 V16 c0 3.500 -1.500 6 -5 6 H9 c-2.200 0 -3.500 -1.200 -4.500 -3 L1.800 14.500 c-.5 -.9 .5 -2 1.500 -1.200 L3.700 13.700 V3.300 c0 -1 .8 -1.800 1.800 -1.800z" fill="#fff" stroke="#222" stroke-width="1"/></svg>
<div style="position:absolute;left:0px;top:1039.6px;width:1920px;height:40.4px;background:linear-gradient(90deg,#2a434e 0%,#27464f 30%,#25444f 42%,#233d50 58%,#1f3350 78%,#1c2e4f 100%);"></div>
<svg style="position:absolute;left:16px;top:1052px" width="17" height="17" viewBox="0 0 17 17" fill="#fff"><path d="M0 2.400 L7.500 1.300 V8 H0Z M8.500 1.150 L17 0 V8 H8.500Z M0 9 H7.500 V15.700 L0 14.600Z M8.500 9 H17 V17 L8.500 15.850Z"/></svg>
<div style="position:absolute;left:48px;top:1040px;width:288.5px;height:40px;background:#f3f3f3;"></div>
<svg style="position:absolute;left:59px;top:1051px" width="18" height="18" viewBox="0 0 18 18" fill="none" stroke="#2b2b2b" stroke-width="1.300"><circle cx="11" cy="7" r="5"/><path d="M7.400 10.600 L1.500 16.500"/></svg>
<span class="t" style="position:absolute;left:88px;top:1050.5px;height:20px;line-height:20px;font-size:15px;color:#505050;font-weight:400;white-space:nowrap;letter-spacing:-0.215px;-webkit-text-stroke:0;text-shadow:none;">Type here to search</span>
<svg style="position:absolute;left:260px;top:1041px" width="76" height="39" viewBox="0 0 76 39"><path d="M28.5 8.5 Q31.58 16.42 39.5 19.5 Q31.58 22.58 28.5 30.5 Q25.42 22.58 17.5 19.5 Q25.42 16.42 28.5 8.5Z" fill="#f9c21b"/><path d="M51 17.0 Q52.54 20.96 56.5 22.5 Q52.54 24.04 51 28.0 Q49.46 24.04 45.5 22.5 Q49.46 20.96 51 17.0Z" fill="#f9c21b"/><path d="M9 22.5 Q10.120000000000001 25.38 13 26.5 Q10.120000000000001 27.62 9 30.5 Q7.88 27.62 5 26.5 Q7.88 25.38 9 22.5Z" fill="#3aa0e8"/><circle cx="44.500" cy="8.500" r="1.800" fill="#e0663a"/><circle cx="63.500" cy="29.500" r="1.800" fill="#8bc34a"/></svg>
<svg style="position:absolute;left:350px;top:1050px" width="20" height="20" viewBox="0 0 20 20" fill="none" stroke="#fff" stroke-width="1.300"><rect x="2.500" y="5.500" width="9" height="8"/><path d="M1 2.500 H13 M1 16.500 H13 M15.500 1 V4 M15.500 6.500 V13 M15.500 15.500 V18.500" /><path d="M15.500 6.500 V13" stroke-width="2.200"/></svg>
<svg style="position:absolute;left:399px;top:1047.600px" width="24" height="24" viewBox="0 0 24 24"><path d="M1.500 4 H9 L11 6 H22.500 V20 H1.500Z" fill="#e8b531"/><path d="M1.500 8 H22.500 V20.500 H1.500Z" fill="#f8d563"/><path d="M6 14 H18 V21 H6Z" fill="#3b8ed8"/><path d="M9 17 H15 V21 H9Z" fill="#f8d563"/></svg>
<svg style="position:absolute;left:447px;top:1047px" width="26" height="26" viewBox="0 0 26 26"><defs><linearGradient id="cp1" x1="0" y1="0" x2="0.300" y2="1"><stop offset="0" stop-color="#2f7fe0"/><stop offset="0.450" stop-color="#35c0c8"/><stop offset="0.750" stop-color="#9fd04a"/><stop offset="1" stop-color="#f2c63e"/></linearGradient><linearGradient id="cp2" x1="0.700" y1="0" x2="0.300" y2="1"><stop offset="0" stop-color="#b45ae6"/><stop offset="0.500" stop-color="#e8559a"/><stop offset="1" stop-color="#f58a3c"/></linearGradient></defs><rect x="11" y="5.500" width="11.500" height="19" rx="5.500" fill="url(#cp2)" transform="rotate(22 16.500 15)"/><rect x="3.500" y="1.500" width="11.500" height="16" rx="5" fill="url(#cp1)" transform="rotate(22 9 9.500)"/></svg>
<svg style="position:absolute;left:495px;top:1046px" width="26" height="27" viewBox="0 0 26 27"><path d="M8 7 V4.500 a2 2 0 0 1 2 -2 H16 a2 2 0 0 1 2 2 V7" fill="none" stroke="#4aa3df" stroke-width="1.800"/><path d="M1.500 7 H24.500 V22 a3 3 0 0 1 -3 3 H4.500 a3 3 0 0 1 -3 -3Z" fill="#f4f4f4"/><rect x="8.500" y="11" width="4" height="4" fill="#f25022"/><rect x="13.500" y="11" width="4" height="4" fill="#7fba00"/><rect x="8.500" y="16" width="4" height="4" fill="#00a4ef"/><rect x="13.500" y="16" width="4" height="4" fill="#ffb900"/></svg>
<svg style="position:absolute;left:544px;top:1047px" width="26" height="26" viewBox="0 0 26 26"><path d="M1 9.500 L13 1.500 L25 9.500 V24 H1Z" fill="#1670c4"/><path d="M1 10 H25 V24 H1Z" fill="#2aa4ee"/><path d="M1 10 L13 18.500 L25 10Z" fill="#e8f4fd"/><path d="M1 24 L13 15 L25 24Z" fill="#1b8fe0"/></svg>
<svg style="position:absolute;left:593px;top:1046px" width="26" height="28" viewBox="0 0 26 28"><path d="M13 1 L25 8 V12 L13 6 L1 12 V8Z" fill="#6cc0ee"/><path d="M13 8 L24 14 V18 L13 12.500 L2 18 V14Z" fill="#4aa8e0"/><path d="M13 14.500 L20 18.500 V22 L13 27 L6 22 V18.500Z" fill="#1d66ac"/></svg>
<svg style="position:absolute;left:650px;top:1049px" width="13" height="22" viewBox="0 0 13 22"><path d="M0.500 0.500 H4 L9 14 V0.500 H12.500 V21.500 H9 L4 8 V21.500 H0.500Z" fill="#c4121a"/><path d="M0.500 0.500 H4 L12.500 21.500 H9Z" fill="#e21d25"/></svg>
<div style="position:absolute;left:681px;top:1040px;width:47.5px;height:40px;background:rgba(255,255,255,0.16);"></div>
<div style="position:absolute;left:681px;top:1078px;width:47.5px;height:2px;background:#8fc3f5;"></div>
<svg style="position:absolute;left:692px;top:1047px" width="26" height="26" viewBox="0 0 24 24"><circle cx="12" cy="12" r="11" fill="#fff"/><path d="M12 12 L2.470 6.500 A11 11 0 0 1 21.530 6.500 Z" fill="#e33b2e"/><path d="M12 12 L21.530 6.500 A11 11 0 0 1 12 23 Z" fill="#fbc116"/><path d="M12 12 L12 23 A11 11 0 0 1 2.470 6.500 Z" fill="#2da94f"/><circle cx="12" cy="12" r="5.300" fill="#fff"/><circle cx="12" cy="12" r="4.200" fill="#3b82f1"/></svg>
<div style="position:absolute;left:733px;top:1078px;width:41px;height:2px;background:#8fc3f5;"></div>
<svg style="position:absolute;left:740px;top:1046px" width="30" height="28" viewBox="0 0 30 28"><circle cx="13" cy="13" r="11" fill="#25252b" stroke="#d8d8d8" stroke-width="1.500"/><path d="M13 5 a4 4 0 0 1 3.500 6 M19.500 15 a4 4 0 0 1 -6.500 3 M6.800 14 a4 4 0 0 1 3 -6.500" fill="none" stroke="#d8d8d8" stroke-width="1.600"/><circle cx="20.500" cy="19.500" r="6.300" fill="#f01515"/></svg>
<svg style="position:absolute;left:1519px;top:1046px" width="30" height="30" viewBox="0 0 30 30"><path d="M3 15.500 A11 9.500 0 0 1 25 15.500 Q22 13.500 19.500 15.500 Q17 13.500 14 15.500 Q11 13.500 8.500 15.500 Q5.500 13.500 3 15.500Z" fill="#8fd0ee"/><path d="M14 15 V24 a2 2 0 0 1 -4 0" fill="none" stroke="#8a9097" stroke-width="1.500"/><g fill="#4a9be0"><circle cx="17" cy="3.500" r="1"/><circle cx="21" cy="2.500" r="1"/><circle cx="24.500" cy="5" r="1"/><circle cx="20" cy="6.500" r="1"/><circle cx="26" cy="9" r="1"/><circle cx="23" cy="10" r="1"/></g></svg>
<span class="t" style="position:absolute;left:1553.5px;top:1050.2px;height:20px;line-height:20px;font-size:14px;color:#fff;font-weight:400;white-space:nowrap;letter-spacing:-0.116px;">2 cm of rain Fri</span>
<svg style="position:absolute;left:1670px;top:1055px" width="13" height="9" viewBox="0 0 13 9" fill="none" stroke="#fff" stroke-width="1.300"><path d="M1 7.500 L6.500 2 L12 7.500"/></svg>
<svg style="position:absolute;left:1693px;top:1050px" width="16" height="20" viewBox="0 0 16 20" fill="none" stroke="#fff" stroke-width="1.200"><path d="M3 3.500 A6 5 0 0 1 13 3.500 M3 16.500 A6 5 0 0 0 13 16.500"/><rect x="1.500" y="6" width="9" height="8" rx="1.500"/><path d="M10.500 9 L14.500 7 V13 L10.500 11"/></svg>
<svg style="position:absolute;left:1717px;top:1051px" width="18" height="18" viewBox="0 0 18 18" fill="none" stroke="#d0d4d8" stroke-width="1.300"><path d="M2 17 A15 15 0 0 1 17 2 M5.500 17 A11.500 11.500 0 0 1 17 5.500 M9 17 A8 8 0 0 1 17 9 M12.500 17 A4.500 4.500 0 0 1 17 12.500"/><circle cx="15.500" cy="15.500" r="1.500" fill="#fff" stroke="none"/></svg>
<svg style="position:absolute;left:1739px;top:1051px" width="19" height="18" viewBox="0 0 19 18" fill="none" stroke="#fff" stroke-width="1.200"><path d="M1.500 6.500 H4.500 L8.500 2.500 V15.500 L4.500 11.500 H1.500Z"/><path d="M11 6.500 A3.500 3.500 0 0 1 11 11.500 M13 4.500 A6 6 0 0 1 13 13.500 M15 2.500 A9 9 0 0 1 15 15.500"/></svg>
<span class="t" style="position:absolute;left:1766.5px;top:1050.5px;height:20px;line-height:20px;font-size:12px;color:#fff;font-weight:400;white-space:nowrap;letter-spacing:-0.839px;">ENG</span>
<span class="t" style="position:absolute;left:1810.3px;top:1041.3px;height:20px;line-height:20px;font-size:11.5px;color:#fff;font-weight:400;white-space:nowrap;letter-spacing:0.134px;">4:45 pm</span>
<span class="t" style="position:absolute;left:1802.3px;top:1058.3px;height:20px;line-height:20px;font-size:11.5px;color:#fff;font-weight:400;white-space:nowrap;letter-spacing:0.144px;">09/10/2025</span>
<svg style="position:absolute;left:1878px;top:1051px" width="18" height="18" viewBox="0 0 18 18" fill="none" stroke="#fff" stroke-width="1.300"><path d="M1 1.500 H17 V13 H11.500 L9 15.500 L6.500 13 H1Z"/></svg>
<div style="position:absolute;left:1914.5px;top:1041px;width:1px;height:39px;background:#6a7f96;"></div>
</div></div></body></html>
